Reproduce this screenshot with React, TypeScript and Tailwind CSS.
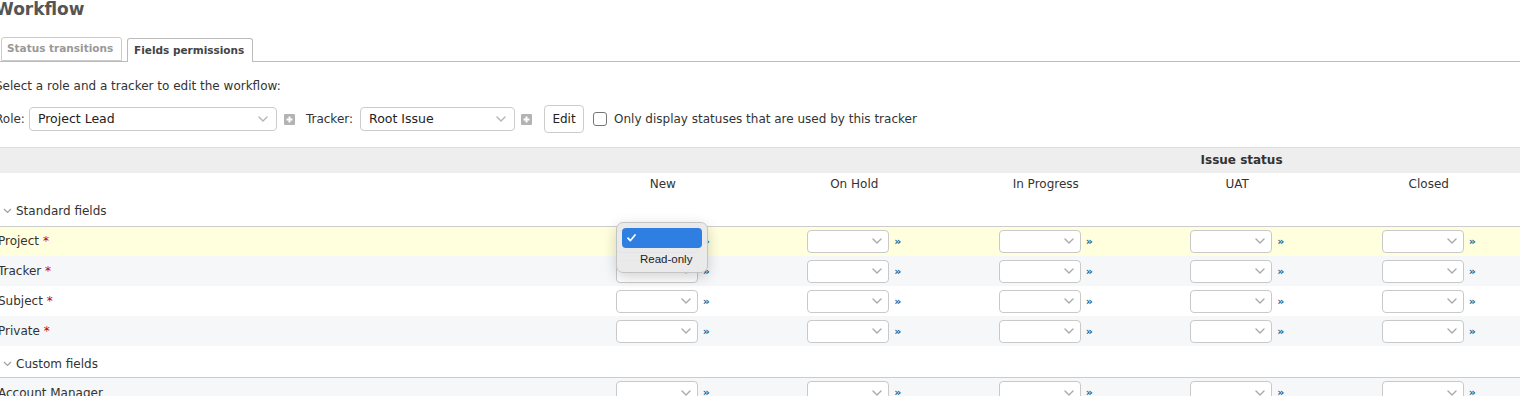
import React from 'react';

const statuses = ['New', 'On Hold', 'In Progress', 'UAT', 'Closed', 'Resolved', 'Rejected'];

const standardFields = [
  { name: 'Project', required: true, bg: 'bg-[#ffffdd]' },
  { name: 'Tracker', required: true, bg: 'bg-[#f6f7f8]' },
  { name: 'Subject', required: true, bg: 'bg-white' },
  { name: 'Private', required: true, bg: 'bg-[#f6f7f8]' },
];

const customFields = [{ name: 'Account Manager', required: false, bg: 'bg-[#f6f7f8]' }];

const Chevron = ({ color = '#a8a8a8' }: { color?: string }) => (
  <svg width="10" height="6" viewBox="0 0 10 6" fill="none">
    <path d="M1 1l4 4 4-4" stroke={color} strokeWidth="1.4" strokeLinecap="round" strokeLinejoin="round" />
  </svg>
);

const PlusBox = () => (
  <svg width="11" height="11" viewBox="0 0 11 11">
    <rect width="11" height="11" rx="1" fill="#b3b3b3" />
    <path d="M5.5 2.5v6M2.5 5.5h6" stroke="#fff" strokeWidth="2" />
  </svg>
);

const FieldCell = ({ focused }: { focused?: boolean }) => (
  <div className="flex items-center justify-center">
    <div
      className={`w-[82px] h-[23px] rounded-[4px] bg-white border flex items-center justify-end pr-[6px] ${
        focused ? 'border-[#4a86d8]' : 'border-[#c9c9c9]'
      }`}
    >
      <Chevron color="#aaaaaa" />
    </div>
    <span className="ml-[5px] text-[11px] font-bold leading-none text-[#116699]">»</span>
  </div>
);

const GroupRow = ({ label, top }: { label: string; top?: boolean }) => (
  <tr>
    <td
      colSpan={8}
      className={`border-b border-[#cccccc] pl-[8px] leading-[16px] ${top ? 'pt-[8px] pb-[7px]' : 'pt-[10px] pb-[5px]'}`}
    >
      <div className="flex items-center">
        <svg width="9" height="6" viewBox="0 0 9 6" fill="none">
          <path d="M1 1l3.5 3.5L8 1" stroke="#a0a0a0" strokeWidth="1.2" />
        </svg>
        <span className="ml-[4px]">{label}</span>
      </div>
    </td>
  </tr>
);

const FieldRow = ({ name, required, bg, first }: { name: string; required: boolean; bg: string; first?: boolean }) => (
  <tr className={bg}>
    <td className="h-[30px] pl-[3px] leading-[16px] whitespace-nowrap">
      {name}
      {required && <span className="text-[#bb0000]"> *</span>}
    </td>
    {statuses.map((s, i) => (
      <td key={s} className="h-[30px]">
        <FieldCell focused={first && i === 0} />
      </td>
    ))}
  </tr>
);

export default function App() {
  return (
    <div className="relative w-[1520px] h-[396px] overflow-hidden bg-white text-[12px] text-[#333333] font-['DejaVu_Sans',Verdana,sans-serif]">
      <div className="ml-[-5px] w-[1930px]">
        <h2 className="text-[17px] font-bold leading-[18px] text-[#555555]">Workflow</h2>

        <div className="mt-[20px] flex items-end pl-[6px] border-b border-[#bbbbbb] h-[24px]">
          <div className="w-[121px] h-[24px] border border-[#cccccc] rounded-t-[3px] bg-white flex items-center pl-[5px] text-[10.5px] font-bold text-[#999999]">
            Status transitions
          </div>
          <div className="ml-[5px] w-[126px] h-[24px] mb-[-1px] border border-b-0 border-[#bbbbbb] rounded-t-[3px] bg-white flex items-center pl-[6px] text-[10.5px] font-bold text-[#444444]">
            Fields permissions
          </div>
        </div>

        <p className="mt-[16px] leading-[16px]">Select a role and a tracker to edit the workflow:</p>

        <div className="mt-[11px] h-[28px] flex items-center">
          <span>Role:</span>
          <div className="ml-[4px] w-[248px] h-[24px] border border-[#cccccc] rounded-[4px] bg-white flex items-center justify-between pl-[8px] pr-[8px] text-[12.5px] text-[#222222]">
            <span>Project Lead</span>
            <Chevron color="#b5b5b5" />
          </div>
          <span className="ml-[7px] flex items-center">
            <PlusBox />
          </span>
          <span className="ml-[11px]">Tracker:</span>
          <div className="ml-[7px] w-[155px] h-[24px] border border-[#cccccc] rounded-[4px] bg-white flex items-center justify-between pl-[8px] pr-[8px] text-[12.5px] text-[#222222]">
            <span>Root Issue</span>
            <Chevron color="#b5b5b5" />
          </div>
          <span className="ml-[6px] flex items-center">
            <PlusBox />
          </span>
          <button className="ml-[12px] w-[40px] h-[28px] border border-[#cccccc] rounded-[4px] bg-white text-[12px] text-[#222222]">
            Edit
          </button>
          <span className="ml-[9px] w-[14px] h-[14px] border border-[#777777] rounded-[3px] bg-white" />
          <span className="ml-[7px]">Only display statuses that are used by this tracker</span>
        </div>

        <table className="mt-[14px] table-fixed border-collapse w-[1921px]">
          <colgroup>
            <col className="w-[572px]" />
            <col className="w-[191.5px]" />
            <col className="w-[191.5px]" />
            <col className="w-[191.5px]" />
            <col className="w-[191.5px]" />
            <col className="w-[191.5px]" />
            <col className="w-[191.5px]" />
            <col className="w-[200px]" />
          </colgroup>
          <thead>
            <tr className="bg-[#eeeeee] border-t border-[#dddddd]">
              <th className="h-[25px]" />
              <th colSpan={7} className="h-[25px] text-center font-bold">
                Issue status
              </th>
            </tr>
            <tr>
              <td className="h-[22px]" />
              {statuses.map((s) => (
                <td key={s} className="h-[22px] pt-[1px] text-center font-normal">
                  {s}
                </td>
              ))}
            </tr>
          </thead>
          <tbody>
            <GroupRow label="Standard fields" top />
            {standardFields.map((f, i) => (
              <FieldRow key={f.name} {...f} first={i === 0} />
            ))}
            <GroupRow label="Custom fields" />
            {customFields.map((f) => (
              <FieldRow key={f.name} {...f} />
            ))}
          </tbody>
        </table>
      </div>

      {/* open native select menu */}
      <div className="absolute left-[616px] top-[222px] w-[92px] h-[51px] rounded-[7px] border border-[#c4c4c4] bg-[#e9e9e9]/95 shadow-[0_4px_14px_rgba(0,0,0,0.18)] p-[5px]">
        <div className="h-[20px] rounded-[4px] bg-[#2f7fe3] flex items-center pl-[5px]">
          <svg width="9" height="8" viewBox="0 0 9 8" fill="none">
            <path d="M1 4.2l2.3 2.5L8 1" stroke="#fff" strokeWidth="1.7" strokeLinecap="round" strokeLinejoin="round" />
          </svg>
        </div>
        <div className="mt-[3px] pl-[18px] text-[11.5px] leading-[16px] text-[#222222] font-['Liberation_Sans',Arial,sans-serif]">
          Read-only
        </div>
      </div>
    </div>
  );
}
